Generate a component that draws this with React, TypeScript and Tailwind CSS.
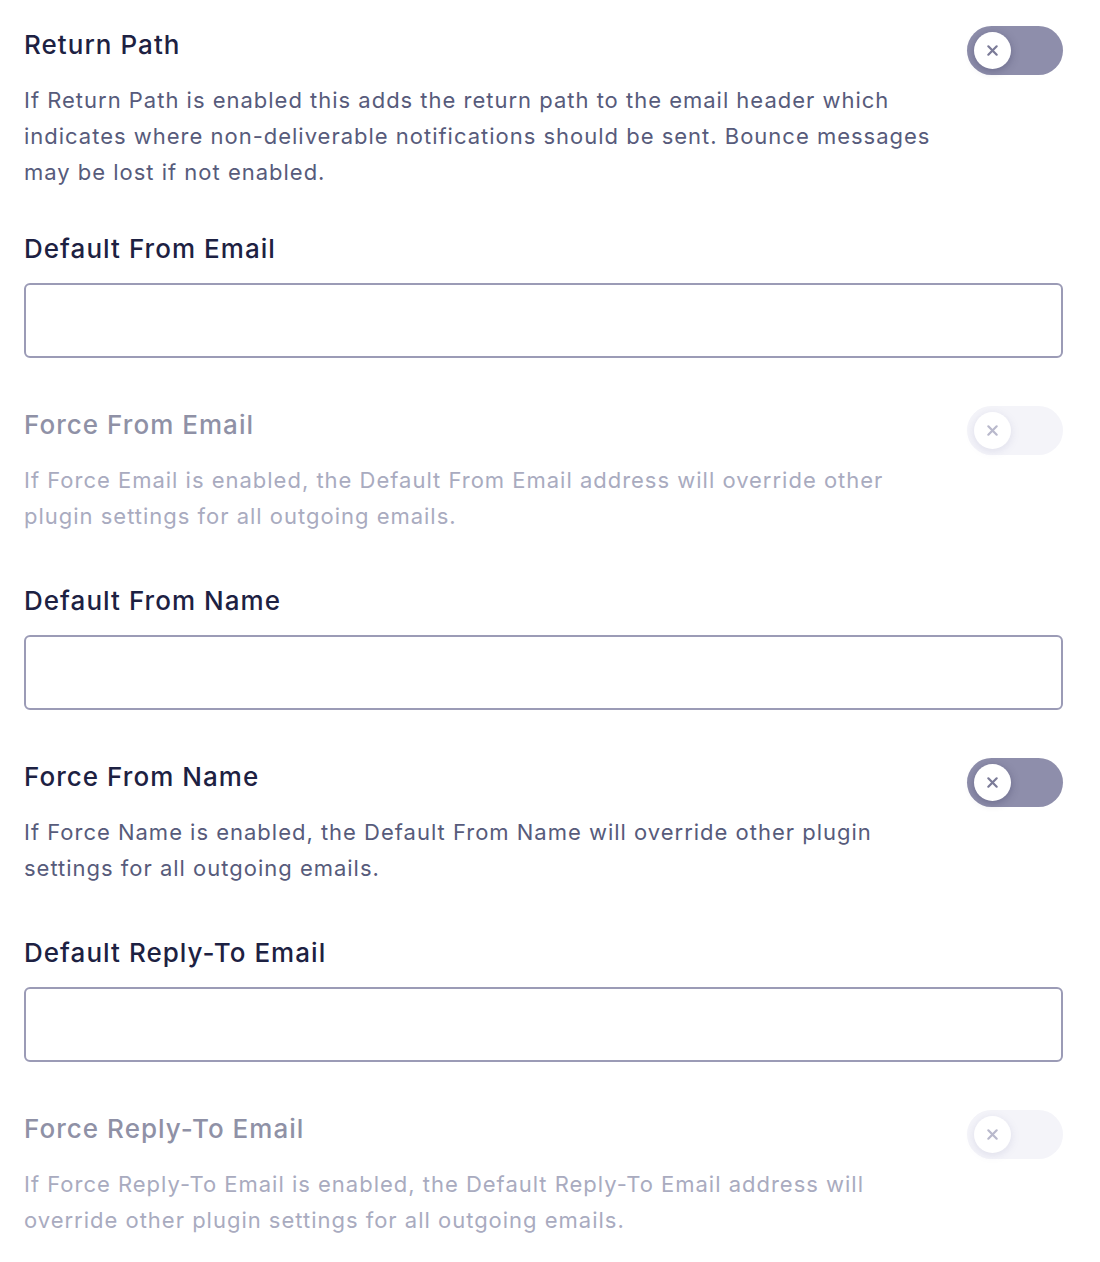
import React, { useState } from 'react';

type ToggleProps = {
  on: boolean;
  disabled?: boolean;
  onChange?: () => void;
};

function Toggle({ on, disabled, onChange }: ToggleProps) {
  return (
    <button
      type="button"
      onClick={onChange}
      disabled={disabled}
      className={`relative -mt-px flex h-[49px] w-[96px] shrink-0 items-center rounded-full px-[7px] ${
        disabled ? 'bg-[#f4f4f9]' : 'bg-[#8e8eab]'
      }`}
    >
      <span
        className={`flex h-[37px] w-[37px] items-center justify-center rounded-full bg-white ${
          disabled
            ? 'shadow-[0_2px_8px_rgba(120,120,170,0.18)]'
            : 'shadow-[0_2px_8px_rgba(40,40,80,0.35)]'
        } ${on ? 'translate-x-[45px]' : ''}`}
      >
        <svg
          width="13"
          height="13"
          viewBox="0 0 14 14"
          fill="none"
          stroke={disabled ? '#b9b9cc' : '#7b7b98'}
          strokeWidth="2.4"
          strokeLinecap="round"
        >
          <path d="M2.5 2.5l9 9M11.5 2.5l-9 9" />
        </svg>
      </span>
    </button>
  );
}

type ToggleSectionProps = {
  title: string;
  desc: string;
  disabled?: boolean;
  className?: string;
};

function ToggleSection({ title, desc, disabled, className = '' }: ToggleSectionProps) {
  const [on, setOn] = useState(false);
  return (
    <div className={className}>
      <div className="flex h-9 items-start justify-between">
        <h3
          className={`text-[26px] font-medium leading-9 tracking-[0.04em] ${
            disabled ? 'text-[#8f91a6]' : 'text-[#1d2142]'
          }`}
        >
          {title}
        </h3>
        <Toggle on={on} disabled={disabled} onChange={() => setOn(!on)} />
      </div>
      <p
        className={`mt-[19px] w-[922px] text-[22px] leading-9 tracking-[0.045em] ${
          disabled ? 'text-[#a9abbf]' : 'text-[#575b7b]'
        }`}
      >
        {desc}
      </p>
    </div>
  );
}

function InputField({ label, className = '' }: { label: string; className?: string }) {
  return (
    <div className={className}>
      <label className="block text-[26px] font-medium leading-9 tracking-[0.04em] text-[#1d2142]">
        {label}
      </label>
      <input
        type="text"
        className="mt-4 block h-[75px] w-full rounded-[6px] border-2 border-[#9b9bb6] bg-white px-4 text-[22px] text-[#1d2142] focus:outline-none"
      />
    </div>
  );
}

export default function App() {
  return (
    <main
      className="min-h-[1262px] bg-white pl-6 pr-[37px] pt-[27px]"
      style={{ fontFamily: 'Inter, "Noto Sans", sans-serif' }}
    >
      <ToggleSection
        title="Return Path"
        desc="If Return Path is enabled this adds the return path to the email header which indicates where non-deliverable notifications should be sent. Bounce messages may be lost if not enabled."
      />
      <InputField label="Default From Email" className="mt-[41px]" />
      <ToggleSection
        className="mt-[49px]"
        title="Force From Email"
        disabled
        desc="If Force Email is enabled, the Default From Email address will override other plugin settings for all outgoing emails."
      />
      <InputField label="Default From Name" className="mt-[49px]" />
      <ToggleSection
        className="mt-[49px]"
        title="Force From Name"
        desc="If Force Name is enabled, the Default From Name will override other plugin settings for all outgoing emails."
      />
      <InputField label="Default Reply-To Email" className="mt-[49px]" />
      <ToggleSection
        className="mt-[49px]"
        title="Force Reply-To Email"
        disabled
        desc="If Force Reply-To Email is enabled, the Default Reply-To Email address will override other plugin settings for all outgoing emails."
      />
    </main>
  );
}
